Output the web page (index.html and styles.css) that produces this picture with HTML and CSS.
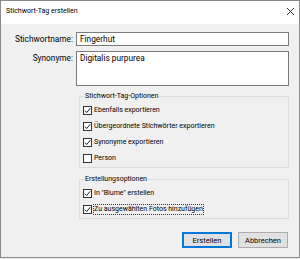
FILE: index.html
```html
<!DOCTYPE html>
<html lang="de">
<head>
<meta charset="UTF-8">
<title>Stichwort-Tag erstellen</title>
<link rel="stylesheet" href="styles.css">
</head>
<body>
    <div class="window">
        <div class="titlebar">
            <span class="title">Stichwort-Tag erstellen</span>
            <svg class="close" width="9" height="9" viewBox="0 0 9 9"><path d="M1 1 L8 8 M8 1 L1 8" stroke="#333" stroke-width="1"/></svg>
        </div>

        <div class="content">
            <div class="fields">
                <label class="field-label" for="name">Stichwortname:</label>
                <div class="input" id="name">Fingerhut</div>
                <label class="field-label" for="syn">Synonyme:</label>
                <div class="input textarea" id="syn">Digitalis purpurea</div>
            </div>

            <fieldset class="group">
                <legend>Stichwort-Tag-Optionen</legend>
                <div class="check-row"><span class="box checked"><svg width="7" height="7" viewBox="0 0 7 7"><path d="M0.8 3.6 L2.7 5.5 L6.3 1.2" fill="none" stroke="#222" stroke-width="1"/></svg></span>Ebenfalls exportieren</div>
                <div class="check-row"><span class="box checked"><svg width="7" height="7" viewBox="0 0 7 7"><path d="M0.8 3.6 L2.7 5.5 L6.3 1.2" fill="none" stroke="#222" stroke-width="1"/></svg></span>Übergeordnete Stichwörter exportieren</div>
                <div class="check-row"><span class="box checked"><svg width="7" height="7" viewBox="0 0 7 7"><path d="M0.8 3.6 L2.7 5.5 L6.3 1.2" fill="none" stroke="#222" stroke-width="1"/></svg></span>Synonyme exportieren</div>
                <div class="check-row"><span class="box"></span>Person</div>
            </fieldset>

            <fieldset class="group group-second">
                <legend>Erstellungsoptionen</legend>
                <div class="check-row"><span class="box checked"><svg width="7" height="7" viewBox="0 0 7 7"><path d="M0.8 3.6 L2.7 5.5 L6.3 1.2" fill="none" stroke="#222" stroke-width="1"/></svg></span>In "Blume" erstellen</div>
                <div class="check-row"><span class="box checked"><svg width="7" height="7" viewBox="0 0 7 7"><path d="M0.8 3.6 L2.7 5.5 L6.3 1.2" fill="none" stroke="#222" stroke-width="1"/></svg></span><span class="focus">Zu ausgewählten Fotos hinzufügen</span></div>
            </fieldset>

            <div class="buttons">
                <button class="button button-default">Erstellen</button>
                <button class="button">Abbrechen</button>
            </div>
        </div>
    </div>
</body>
</html>
```

FILE: styles.css
```css
body {
    margin: 0;
    padding: 0;
    background-color: #f0f0f0;
    font-family: Roboto, "Open Sans", sans-serif;
    color: #000;
}

.window {
    width: 300px;
    height: 258px;
    box-sizing: border-box;
    border: 1px solid #8a8a8a;
    background-color: #f0f0f0;
    display: flex;
    flex-direction: column;
}

.titlebar {
    height: 23px;
    flex: none;
    background-color: #fff;
    display: flex;
    justify-content: space-between;
    align-items: center;
    padding: 0 4px 3px 5px;
    box-sizing: border-box;
    font-size: 7px;
}

.content {
    padding: 8px 10px 0 0;
}

.fields {
    display: grid;
    grid-template-columns: 72px 1fr;
    column-gap: 3px;
    row-gap: 5px;
}

.field-label {
    text-align: right;
    font-size: 8.3px;
    line-height: 14px;
}

.input {
    height: 14px;
    box-sizing: border-box;
    border: 1px solid #7a7a7a;
    background-color: #fff;
    padding: 0 3px;
    font-size: 8.3px;
    line-height: 12px;
}

.textarea {
    height: 35px;
}

.group {
    margin: 5px 0 0 78px;
    padding: 1px 0 1px 3px;
    border: 1px solid #dcdcdc;
    font-size: 7px;
}

.group legend {
    padding: 0 1px;
    margin-left: 1px;
    line-height: 10px;
}

.group-second {
    margin-top: 6px;
}

.check-row {
    height: 16px;
    display: flex;
    align-items: center;
}

.box {
    width: 9px;
    height: 9px;
    box-sizing: border-box;
    border: 1px solid #333;
    background-color: #fff;
    margin-right: 2px;
    display: flex;
    align-items: center;
    justify-content: center;
}

.focus {
    outline: 1px dotted #333;
    outline-offset: 0;
    line-height: 9px;
}

.buttons {
    display: flex;
    justify-content: flex-end;
    gap: 6px;
    margin-top: 13px;
    padding-right: 1px;
}

.button {
    width: 50px;
    height: 16px;
    box-sizing: border-box;
    padding: 0;
    border: 1px solid #adadad;
    background-color: #e1e1e1;
    font-family: Roboto, "Open Sans", sans-serif;
    font-size: 7.5px;
    color: #000;
}

.button-default {
    border: 1px solid #0078d7;
    box-shadow: inset 0 0 0 1px #0078d7;
}
```
